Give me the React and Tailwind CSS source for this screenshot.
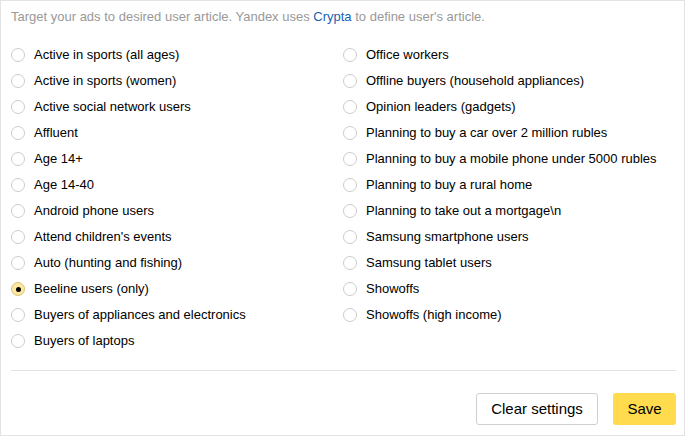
import React from "react";

const col1 = [
  "Active in sports (all ages)",
  "Active in sports (women)",
  "Active social network users",
  "Affluent",
  "Age 14+",
  "Age 14-40",
  "Android phone users",
  "Attend children's events",
  "Auto (hunting and fishing)",
  "Beeline users (only)",
  "Buyers of appliances and electronics",
  "Buyers of laptops",
];
const col2 = [
  "Office workers",
  "Offline buyers (household appliances)",
  "Opinion leaders (gadgets)",
  "Planning to buy a car over 2 million rubles",
  "Planning to buy a mobile phone under 5000 rubles",
  "Planning to buy a rural home",
  "Planning to take out a mortgage\\n",
  "Samsung smartphone users",
  "Samsung tablet users",
  "Showoffs",
  "Showoffs (high income)",
];

function Radio({ label, checked }) {
  return (
    <div className="flex items-center h-[26px]">
      {checked ? (
        <span className="w-[14px] h-[14px] rounded-full border border-[#dcc173] bg-[#fde7a1] flex items-center justify-center shrink-0">
          <span className="w-[5px] h-[5px] rounded-full bg-black" />
        </span>
      ) : (
        <span className="w-[14px] h-[14px] rounded-full border border-[#cccccc] bg-white shrink-0" />
      )}
      <span className="ml-[9px] text-[13px] text-black whitespace-nowrap">{label}</span>
    </div>
  );
}

export default function App() {
  return (
    <div
      className="w-[685px] h-[436px] bg-white border border-[#e3e3e3] pl-[10px] pr-[8px] flex flex-col"
      style={{ fontFamily: '"Liberation Sans", Arial, Helvetica, sans-serif' }}
    >
      <div className="pt-[8px] h-[33px] text-[13px] leading-[16px] text-[#999999] whitespace-nowrap">
        Target your ads to desired user article. Yandex uses{" "}
        <span className="text-[#1a5fb4]">Crypta</span> to define user's article.
      </div>
      <div className="mt-[8px] grid grid-cols-[332px_1fr]">
        <div className="flex flex-col">
          {col1.map((l) => (
            <Radio key={l} label={l} checked={l === "Beeline users (only)"} />
          ))}
        </div>
        <div className="flex flex-col">
          {col2.map((l) => (
            <Radio key={l} label={l} />
          ))}
        </div>
      </div>
      <div className="mt-[16px] h-px bg-[#e3e3e3]" />
      <div className="mt-[22px] flex justify-end gap-[15px]">
        <button className="h-[32px] w-[122px] rounded-[3px] border border-[#cfcfcf] bg-white text-[15px] text-black">
          Clear settings
        </button>
        <button className="h-[32px] w-[63px] rounded-[3px] bg-[#ffdb4d] text-[15px] text-black">
          Save
        </button>
      </div>
    </div>
  );
}
